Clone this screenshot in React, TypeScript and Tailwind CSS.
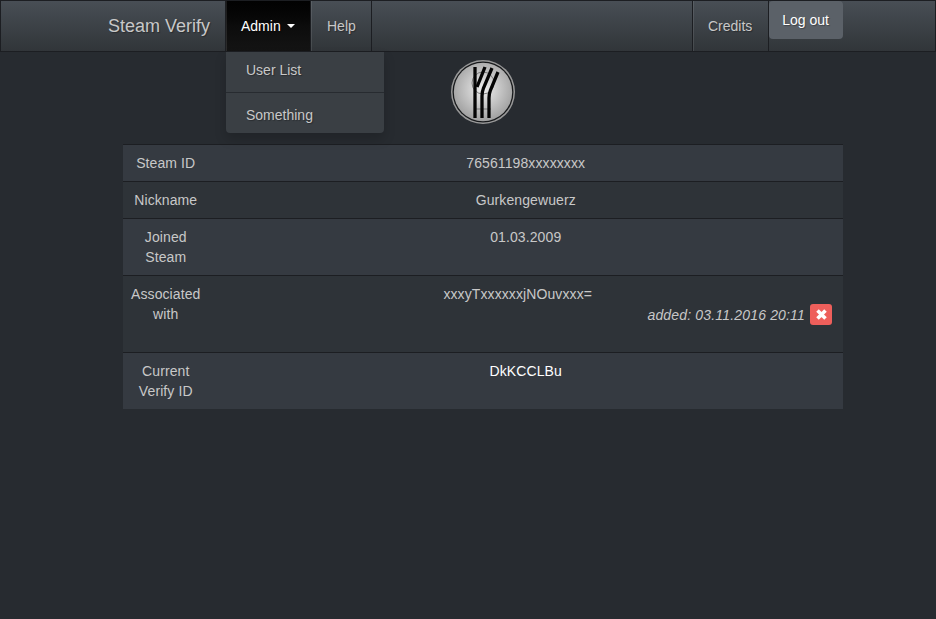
const navLink = 'flex items-center px-[15px] border-l border-[#1c1e22] shadow-[inset_1px_0_0_rgba(255,255,255,0.1)] text-[#c8c8c8] [text-shadow:1px_1px_1px_rgba(0,0,0,0.3)]';

const rows = [
  { label: 'Steam ID', value: '76561198xxxxxxxx' },
  { label: 'Nickname', value: 'Gurkengewuerz' },
  { label: 'Joined Steam', value: '01.03.2009' },
];

function Logo() {
  return (
    <svg width="66" height="66" viewBox="0 0 66 66">
      <defs>
        <radialGradient id="logoFill" cx="50%" cy="45%" r="55%">
          <stop offset="0%" stopColor="#efefef" />
          <stop offset="100%" stopColor="#a0a0a0" />
        </radialGradient>
      </defs>
      <circle cx="33" cy="33" r="32" fill="#999" />
      <circle cx="33" cy="33" r="30.5" fill="#17191b" />
      <circle cx="33" cy="33" r="29.2" fill="url(#logoFill)" />
      <circle cx="33" cy="24" r="11" fill="none" stroke="#666" strokeWidth="0.8" />
      <path d="M25 50 H41" fill="none" stroke="#666" strokeWidth="0.8" />
      <g fill="none" stroke="#050505" strokeWidth="3.3">
        <path d="M25 8 V59" />
        <path d="M35 8 L27 28" />
        <path d="M32 59 V37 Q32 33 33.5 29 L42 9" />
        <path d="M39 59 V39 Q39 35 40.5 31 L48 13" />
      </g>
    </svg>
  );
}

export default function App() {
  return (
    <div className="min-h-[619px] bg-[#272b30] font-['Liberation_Sans',Arial,sans-serif] text-sm leading-5 text-[#c8c8c8]">
      <nav className="h-[52px] border border-[#1c1e22] bg-gradient-to-b from-[#484e55] via-[#3a3f44] via-60% to-[#313539]">
        <div className="ml-[106px] flex h-full w-[751px]">
          <div className="flex w-[118px] items-center pl-px text-lg text-[#c8c8c8] [text-shadow:1px_1px_1px_rgba(0,0,0,0.3)]">Steam Verify</div>
          <div className="relative flex">
            <div className={`${navLink} w-[85px] bg-gradient-to-b from-[#020202] via-[#0c0c0c] to-[#141414] text-white`}>
              Admin
              <span className="ml-[6px] h-0 w-0 border-x-4 border-t-4 border-x-transparent border-t-white" />
            </div>
            <div className="absolute left-px top-[51px] z-10 w-[158px] rounded-b bg-[#3a3f44] shadow-[0_6px_12px_rgba(0,0,0,0.175)]">
              <div className="flex h-10 items-center px-5 pb-[4px] text-[#c8c8c8] [text-shadow:1px_1px_1px_rgba(0,0,0,0.3)]">User List</div>
              <div className="h-px bg-[#272b30]" />
              <div className="flex h-10 items-center px-5 pt-[4px] text-[#c8c8c8] [text-shadow:1px_1px_1px_rgba(0,0,0,0.3)]">Something</div>
            </div>
          </div>
          <div className={`${navLink} pl-[16px]`}>Help</div>
          <div className="w-px border-l border-[#1c1e22] shadow-[inset_1px_0_0_rgba(255,255,255,0.1)]" />
          <div className={`${navLink} ml-auto w-[76px]`}>Credits</div>
          <div className="mr-[15px] w-[75px] border-l border-[#1c1e22]">
            <div className="flex h-[38px] items-center justify-center rounded bg-[#5b6168] pr-px text-white [text-shadow:1px_1px_1px_rgba(0,0,0,0.3)]">Log out</div>
          </div>
        </div>
      </nav>

      <div className="ml-[123px] w-[720px]">
        <div className="flex h-[92px] justify-center pt-[7px]">
          <Logo />
        </div>
        <table className="w-full border-collapse text-center tracking-[0.1px]">
          <tbody>
            {rows.map((row, i) => (
              <tr key={row.label} className={`border-t border-[#1c1e22] ${i % 2 === 0 ? 'bg-[#353a41]' : 'bg-[#2e3338]'}`}>
                <td className="w-[85px] p-2 align-top">{row.label}</td>
                <td className="p-2 align-top">{row.value}</td>
              </tr>
            ))}
            <tr className="border-t border-[#1c1e22] bg-[#2e3338]">
              <td className="p-2 align-top">Associated with</td>
              <td className="p-2 pb-[27px] pr-[11px] align-top">
                <div className="pr-[13px]">xxxyTxxxxxxjNOuvxxx=</div>
                <div className="flex items-center justify-end gap-[5px] italic tracking-[0.17px]">
                  added: 03.11.2016 20:11
                  <span className="flex h-[21px] w-[22px] items-center justify-center rounded-[3px] bg-[#ee5f5b]">
                    <svg width="13" height="13" viewBox="0 0 13 13">
                      <path d="M2.5 2.5 L10.5 10.5 M10.5 2.5 L2.5 10.5" stroke="#fff" strokeWidth="3.6" />
                    </svg>
                  </span>
                </div>
              </td>
            </tr>
            <tr className="border-t border-[#1c1e22] bg-[#353a41]">
              <td className="p-2 align-top">Current Verify ID</td>
              <td className="p-2 align-top font-medium text-white">DkKCCLBu</td>
            </tr>
          </tbody>
        </table>
      </div>
    </div>
  );
}
